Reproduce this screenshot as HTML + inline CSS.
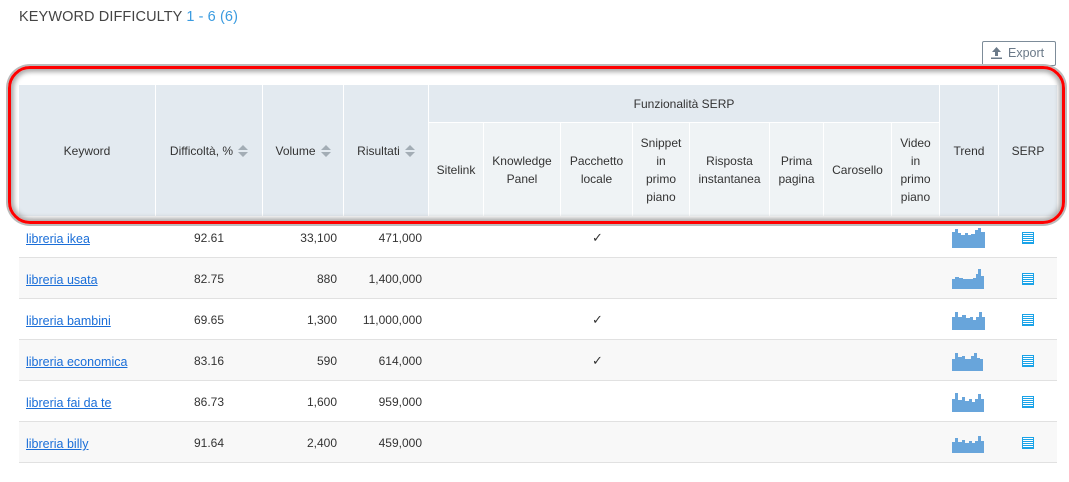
<!DOCTYPE html>
<html><head><meta charset="utf-8"><style>
*{margin:0;padding:0;box-sizing:border-box}
body{width:1069px;height:482px;background:#fff;font-family:"Liberation Sans",Arial,sans-serif;font-size:12px;color:#333;position:relative;overflow:hidden}
.a{position:absolute}
.title{left:19px;top:9px;font-size:14.5px;color:#444;letter-spacing:0.1px}
.title span{color:#3a9be0}
.exp{left:982px;top:41px;width:74px;height:25px;border:1px solid #7d8c99;border-radius:2px;color:#6b7a89;font-size:12.5px;line-height:23px;padding-left:25px}
.h{position:absolute;background:#e3eaf0;display:flex;align-items:center;justify-content:center;text-align:center;line-height:18px;border-right:1px solid #fff}
.s{background:#eff3f5}
.ar{display:inline-block;width:10px;height:14px;vertical-align:middle;margin-left:5px}
.row{position:absolute;left:19px;width:1038px;height:41px;border-bottom:1px solid #e1e1e1}
.row.g{background:#f8f8f8}
.kw{position:absolute;left:7px;top:15px;color:#1a6ed8;text-decoration:underline;font-size:12.5px}
.d{position:absolute;left:175px;top:14px}
.v{position:absolute;right:720px;top:14px;text-align:right}
.r{position:absolute;right:635px;top:14px;text-align:right}
.ck{position:absolute;left:573px;top:13px;font-size:13px}
.sp{position:absolute;left:933px;top:10px}
.ic{position:absolute;left:1003px;top:15px;width:12px;height:12px;border:1.5px solid #1aa3e8;background:repeating-linear-gradient(#fff 0 1px,#1aa3e8 1px 2px);}
.ring{left:8px;top:66px;width:1057px;height:158px;border:3.5px solid #f00;border-radius:22px;box-shadow:0 0 0 2px #bbb,inset 0 0 5px 3px #aaa}
</style></head><body>
<div class="a title">KEYWORD DIFFICULTY <span>1 - 6 (6)</span></div>
<div class="a exp"><svg class="a" style="left:8px;top:5px" width="11" height="12" viewBox="0 0 11 12"><path d="M5.5 0L1 5h3v4h3V5h3z M0 10.5h11V12H0z" fill="#6b7a89"/></svg>Export</div>

<div class="h" style="left:19px;top:85px;width:137px;height:131px">Keyword</div>
<div class="h" style="left:156px;top:85px;width:107px;height:131px">Difficoltà, %<svg class="ar" viewBox="0 0 10 14"><path d="M5 1L10 6H0zM5 13L10 8H0z" fill="#a3adb5"/></svg></div>
<div class="h" style="left:263px;top:85px;width:81px;height:131px">Volume<svg class="ar" viewBox="0 0 10 14"><path d="M5 1L10 6H0zM5 13L10 8H0z" fill="#a3adb5"/></svg></div>
<div class="h" style="left:344px;top:85px;width:85px;height:131px">Risultati<svg class="ar" viewBox="0 0 10 14"><path d="M5 1L10 6H0zM5 13L10 8H0z" fill="#a3adb5"/></svg></div>
<div class="h" style="left:429px;top:85px;width:511px;height:38px;border-bottom:1px solid #fff">Funzionalità SERP</div>
<div class="h s" style="left:429px;top:123px;width:55px;height:93px">Sitelink</div>
<div class="h s" style="left:484px;top:123px;width:77px;height:93px">Knowledge<br>Panel</div>
<div class="h s" style="left:561px;top:123px;width:72px;height:93px">Pacchetto<br>locale</div>
<div class="h s" style="left:633px;top:123px;width:57px;height:93px">Snippet<br>in<br>primo<br>piano</div>
<div class="h s" style="left:690px;top:123px;width:80px;height:93px">Risposta<br>instantanea</div>
<div class="h s" style="left:770px;top:123px;width:54px;height:93px">Prima<br>pagina</div>
<div class="h s" style="left:824px;top:123px;width:68px;height:93px">Carosello</div>
<div class="h s" style="left:892px;top:123px;width:48px;height:93px">Video<br>in<br>primo<br>piano</div>
<div class="h" style="left:940px;top:85px;width:59px;height:131px">Trend</div>
<div class="h" style="left:999px;top:85px;width:58px;height:131px;border-right:0">SERP</div>

<div class="row" style="top:217px"><a class="kw">libreria ikea</a><div class="d">92.61</div><div class="v">33,100</div><div class="r">471,000</div><div class="ck">✓</div>
<svg class="sp" width="37" height="21"><path d="M0 21V5h3V2h3v4h3V8h4V6h3v2h3V7h4V3h3V1h3v4h4v16z" fill="#68a5db"/></svg><div class="ic"></div></div>
<div class="row g" style="top:258px"><a class="kw">libreria usata</a><div class="d">82.75</div><div class="v">880</div><div class="r">1,400,000</div>
<svg class="sp" width="37" height="21"><path d="M0 21V11h3V9h4v1h4v1h10V10h3V6h2V1h3v7h3v13z" fill="#68a5db"/></svg><div class="ic"></div></div>
<div class="row" style="top:299px"><a class="kw">libreria bambini</a><div class="d">69.65</div><div class="v">1,300</div><div class="r">11,000,000</div><div class="ck">✓</div>
<svg class="sp" width="37" height="21"><path d="M0 21V8h3V3h3v5h4V6h4v3h4V8h3v3h3V8h3V3h3v5h3v13z" fill="#68a5db"/></svg><div class="ic"></div></div>
<div class="row g" style="top:340px"><a class="kw">libreria economica</a><div class="d">83.16</div><div class="v">590</div><div class="r">614,000</div><div class="ck">✓</div>
<svg class="sp" width="37" height="21"><path d="M0 21V9h3V3h3v4h4V6h3v3h6V6h3V3h3v5h3v1h3v12z" fill="#68a5db"/></svg><div class="ic"></div></div>
<div class="row" style="top:381px"><a class="kw">libreria fai da te</a><div class="d">86.73</div><div class="v">1,600</div><div class="r">959,000</div>
<svg class="sp" width="37" height="21"><path d="M0 21V8h3V2h3v7h4V6h3v4h4V8h3v3h3V8h3V3h3v5h3v13z" fill="#68a5db"/></svg><div class="ic"></div></div>
<div class="row g" style="top:422px"><a class="kw">libreria billy</a><div class="d">91.64</div><div class="v">2,400</div><div class="r">459,000</div>
<svg class="sp" width="37" height="21"><path d="M0 21V10h3V6h3v4h4V8h3v3h4V9h3v2h3V9h3V4h3v5h3v12z" fill="#68a5db"/></svg><div class="ic"></div></div>

<div class="a ring"></div>
</body></html>
